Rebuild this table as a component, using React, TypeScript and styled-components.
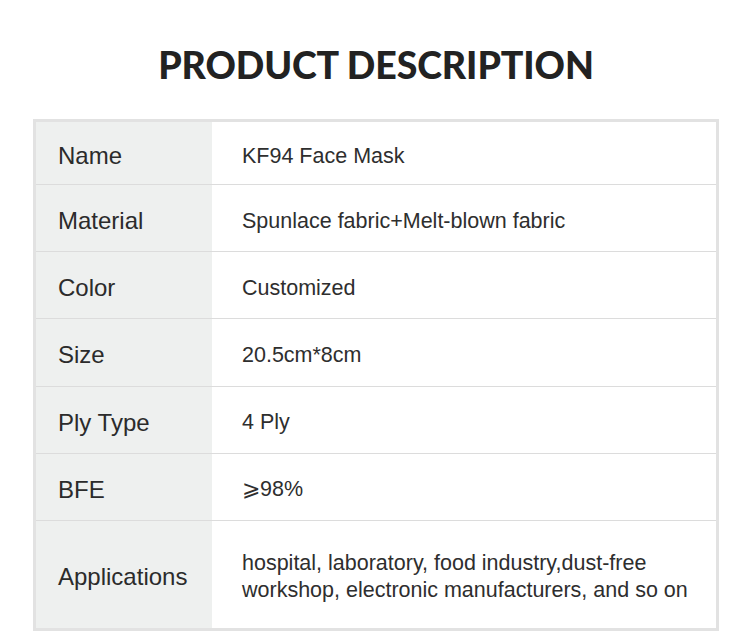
import React from "react";
import styled, { createGlobalStyle } from "styled-components";

const GlobalStyle = createGlobalStyle`
  html, body { margin: 0; padding: 0; background: #ffffff; }
  body { font-family: "Liberation Sans", Arial, sans-serif; color: #333333; }
`;

const Page = styled.div`
  width: 750px;
  height: 638px;
  box-sizing: border-box;
  padding: 40px 31px 0 33px;
  display: flex;
  flex-direction: column;
`;

const Title = styled.h1`
  margin: 0;
  height: 79px;
  font-family: "Lato", "DejaVu Sans", sans-serif;
  font-weight: 900;
  font-size: 37.5px;
  line-height: 50px;
  letter-spacing: -0.1px;
  text-align: center;
  color: #222222;
`;

const Table = styled.div`
  border: 3px solid #e2e2e2;
  display: flex;
  flex-direction: column;
`;

const Row = styled.div<{ $h: number; $last?: boolean }>`
  display: grid;
  grid-template-columns: 176px 1fr;
  height: ${(p) => p.$h}px;
  border-bottom: ${(p) => (p.$last ? "none" : "1px solid #dcdcdc")};
`;

const Label = styled.div`
  background: #eef0ef;
  display: flex;
  align-items: center;
  padding-left: 22px;
  padding-top: 6px;
  font-size: 24px;
  color: #2b2b2b;
`;

const Value = styled.div`
  display: flex;
  align-items: center;
  padding-left: 30px;
  padding-top: 6px;
  font-size: 21.5px;
  line-height: 27px;
  color: #2e2e2e;
`;

const rows: [string, React.ReactNode, number][] = [
  ["Name", "KF94 Face Mask", 62],
  ["Material", "Spunlace fabric+Melt-blown fabric", 66.2],
  ["Color", "Customized", 66.2],
  ["Size", "20.5cm*8cm", 66.2],
  ["Ply Type", "4 Ply", 66.2],
  ["BFE", "⩾98%", 66.2],
  [
    "Applications",
    <>
      hospital, laboratory, food industry,dust-free
      <br />
      workshop, electronic manufacturers, and so on
    </>,
    107,
  ],
];

export default function App() {
  return (
    <>
      <GlobalStyle />
      <Page>
        <Title>PRODUCT DESCRIPTION</Title>
        <Table>
          {rows.map(([l, v, h], i) => (
            <Row key={l} $h={h} $last={i === rows.length - 1}>
              <Label>{l}</Label>
              <Value>{v}</Value>
            </Row>
          ))}
        </Table>
      </Page>
    </>
  );
}
